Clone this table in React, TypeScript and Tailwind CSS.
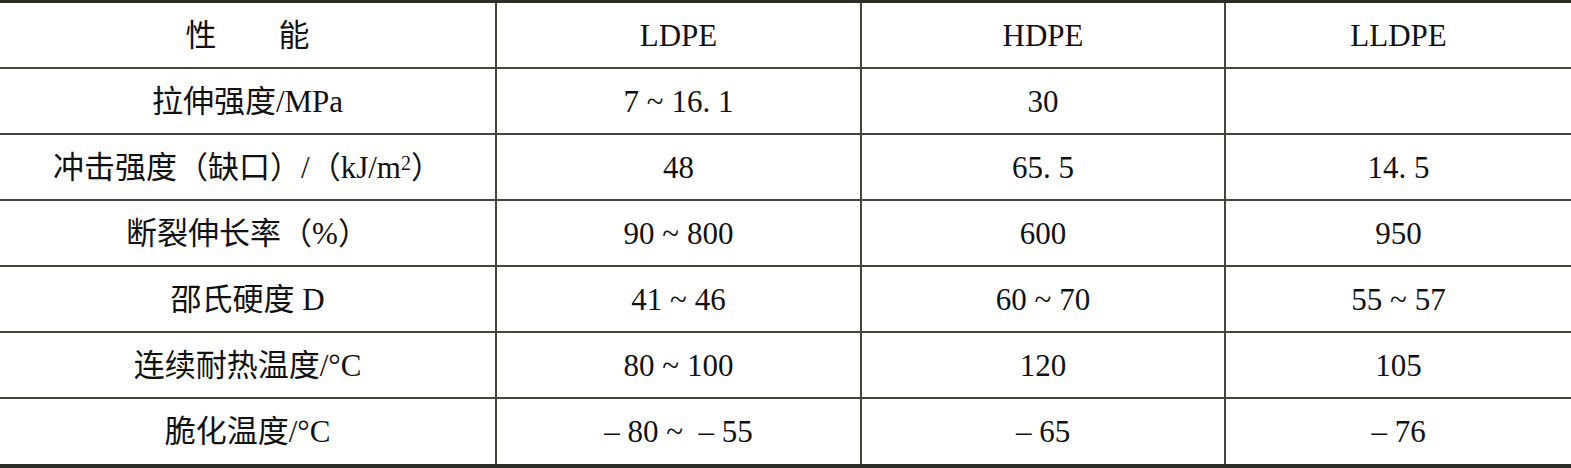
import React from "react";

const rows: [React.ReactNode, string, string, string][] = [
  ["拉伸强度/MPa", "7 ~ 16. 1", "30", ""],
  [
    <>
      冲击强度（缺口）/（kJ/m<sup className="text-[20px] relative -top-[4px]">2</sup>）
    </>,
    "48",
    "65. 5",
    "14. 5",
  ],
  ["断裂伸长率（%）", "90 ~ 800", "600", "950"],
  ["邵氏硬度 D", "41 ~ 46", "60 ~ 70", "55 ~ 57"],
  ["连续耐热温度/°C", "80 ~ 100", "120", "105"],
  ["脆化温度/°C", "– 80 ~  – 55", "– 65", "– 76"],
];

function Row({ cells, last }: { cells: React.ReactNode[]; last?: boolean }) {
  return (
    <div
      className={`flex ${last ? "h-[65px]" : "h-[66px] border-b-2 border-[#45453a]"}`}
    >
      <div className="w-[497px] flex items-center justify-center border-r-2 border-[#45453a] whitespace-pre">
        {cells[0]}
      </div>
      <div className="w-[365px] flex items-center justify-center border-r-2 border-[#45453a] whitespace-pre">
        {cells[1]}
      </div>
      <div className="w-[364px] flex items-center justify-center border-r-2 border-[#45453a] whitespace-pre">
        {cells[2]}
      </div>
      <div className="flex-1 flex items-center justify-center whitespace-pre">
        {cells[3]}
      </div>
    </div>
  );
}

export default function App() {
  return (
    <div className="w-[1571px] h-[468px] bg-white text-[#111] text-[31px] leading-none border-t-[3px] border-b-[4px] border-[#2e2e26] font-[family-name:'Liberation_Serif','Noto_Sans_CJK_SC',serif]">
      <Row cells={["性\u3000\u3000能", "LDPE", "HDPE", "LLDPE"]} />
      {rows.map((r, i) => (
        <Row key={i} cells={r} last={i === rows.length - 1} />
      ))}
    </div>
  );
}
